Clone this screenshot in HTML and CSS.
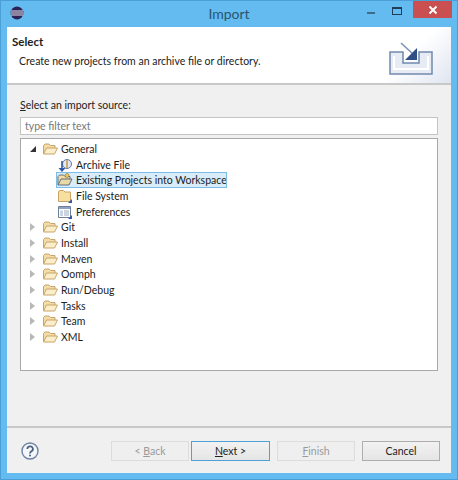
FILE: index.html
```html
<!DOCTYPE html>
<html lang="en">
<head>
    <meta charset="UTF-8">
    <title>Import</title>
    <link rel="stylesheet" href="styles.css">
</head>
<body>
    <div class="window">
        <div class="titlebar">
            <svg class="app-icon" width="16" height="16" viewBox="0 0 16 16">
                <circle cx="8" cy="8" r="6.500" fill="#2c2255"/>
                <path d="M2 6h12M1.600 8h12.800M2 10h12" stroke="#e8e4ee" stroke-width="1"/>
            </svg>
            <div class="title">Import</div>
            <div class="win-buttons">
                <div class="win-min"></div>
                <div class="win-max"></div>
                <div class="win-close">
                    <svg width="10" height="10" viewBox="0 0 10 10"><path d="M1.500 1.500l7 7M8.500 1.500l-7 7" stroke="#fff" stroke-width="2"/></svg>
                </div>
            </div>
        </div>
        <div class="content">
            <div class="banner">
                <div class="banner-text">
                    <div class="banner-title">Select</div>
                    <div class="banner-desc">Create new projects from an archive file or directory.</div>
                </div>
                <svg class="banner-icon" width="44" height="33" viewBox="0 0 44 33">
                    <path d="M1 10h13v11h16V10h13v22H1z" fill="#e6ebf4" stroke="#7189b0" stroke-width="1.500"/>
                    <path d="M5 14v13h34V14" fill="none" stroke="#fff" stroke-width="2"/>
                    <path d="M12 1l12 11" stroke="#7d93b8" stroke-width="1.600"/>
                    <path d="M28 6v12H16z" fill="#2f4f86"/>
                </svg>
            </div>
            <div class="main">
                <div class="source-label"><u>S</u>elect an import source:</div>
                <input class="filter" type="text" placeholder="type filter text">
                <div class="tree">
                    <div class="row"><span class="arrow open"></span><svg class="icon"><use href="#folder"/></svg><span class="name">General</span></div>
                    <div class="row child"><svg class="icon"><use href="#archive"/></svg><span class="name">Archive File</span></div>
                    <div class="row child selected"><svg class="icon"><use href="#projects"/></svg><span class="name">Existing Projects into Workspace</span></div>
                    <div class="row child"><svg class="icon"><use href="#filesys"/></svg><span class="name">File System</span></div>
                    <div class="row child"><svg class="icon"><use href="#prefs"/></svg><span class="name">Preferences</span></div>
                    <div class="row"><span class="arrow"></span><svg class="icon"><use href="#folder"/></svg><span class="name">Git</span></div>
                    <div class="row"><span class="arrow"></span><svg class="icon"><use href="#folder"/></svg><span class="name">Install</span></div>
                    <div class="row"><span class="arrow"></span><svg class="icon"><use href="#folder"/></svg><span class="name">Maven</span></div>
                    <div class="row"><span class="arrow"></span><svg class="icon"><use href="#folder"/></svg><span class="name">Oomph</span></div>
                    <div class="row"><span class="arrow"></span><svg class="icon"><use href="#folder"/></svg><span class="name">Run/Debug</span></div>
                    <div class="row"><span class="arrow"></span><svg class="icon"><use href="#folder"/></svg><span class="name">Tasks</span></div>
                    <div class="row"><span class="arrow"></span><svg class="icon"><use href="#folder"/></svg><span class="name">Team</span></div>
                    <div class="row"><span class="arrow"></span><svg class="icon"><use href="#folder"/></svg><span class="name">XML</span></div>
                </div>
            </div>
            <div class="footer">
                <svg class="help" width="18" height="18" viewBox="0 0 18 18">
                    <circle cx="9" cy="9" r="8" fill="#f4f6f9" stroke="#6d84a5" stroke-width="1.400"/>
                    <path d="M6.300 7a2.800 2.600 0 1 1 4.200 2.200c-1 .6-1.500 1-1.500 2.200" fill="none" stroke="#4a5f80" stroke-width="1.700"/>
                    <circle cx="9" cy="13.600" r="1" fill="#4a5f80"/>
                </svg>
                <div class="buttons">
                    <button class="btn" disabled>&lt; <u>B</u>ack</button>
                    <button class="btn default"><u>N</u>ext &gt;</button>
                    <button class="btn" disabled><u>F</u>inish</button>
                    <button class="btn cancel">Cancel</button>
                </div>
            </div>
        </div>
    </div>

    <svg class="defs" width="0" height="0">
        <defs>
            <g id="folder">
                <path d="M1.500 13V4.500L3 3h4l1.500 1.500H13V7" fill="#f3dca8" stroke="#c9a468"/>
                <path d="M1.500 13l3-6h11l-3 6z" fill="#fbeecb" stroke="#c9a468"/>
            </g>
            <g id="archive">
                <circle cx="10" cy="7" r="4.500" fill="#e3e8f2" stroke="#5f78a3"/>
                <path d="M10 3v8" stroke="#c09a4e" stroke-width="1.500"/>
                <path d="M5 4v8" stroke="#33589a" stroke-width="1.600"/>
                <path d="M1.500 11L5 15l3.500-4z" fill="#2f5aa8"/>
            </g>
            <g id="projects">
                <path d="M1 13V4.500L2.500 3h4L8 4.500h5V7" fill="#f3dca8" stroke="#5f6f80"/>
                <path d="M1 13l3-6h11l-3 6z" fill="#e9d9a6" stroke="#5f6f80"/>
                <circle cx="10" cy="3.500" r="2" fill="#f0c75a" stroke="#7a6a3a" stroke-width=".6"/>
            </g>
            <g id="filesys">
                <path d="M1.500 13.500V3.500L3 2.500h3.500L8 4h5.500v9.500z" fill="#f7dfa0" stroke="#c9a468"/>
                <path d="M11 15l4-4v4z" fill="#2f5aa8"/>
            </g>
            <g id="prefs">
                <path d="M1.500 2.500h12v11h-12z" fill="#fff" stroke="#6f7f99"/>
                <path d="M2 3h11v2H2z" fill="#8fa3c4"/>
                <path d="M3 6.500h3v5.500H3z" fill="#c8d3e5"/>
                <path d="M7 7h5M7 9h5M7 11h5" stroke="#9aa8bf"/>
                <path d="M11 15l4-4v4z" fill="#2f5aa8"/>
            </g>
        </defs>
    </svg>
</body>
</html>
```

FILE: styles.css
```css
* {
    box-sizing: border-box;
}
body {
    margin: 0;
    width: 458px;
    height: 480px;
    overflow: hidden;
    font-family: Lato, sans-serif;
    font-size: 10.500px;
    color: #222;
}
.window {
    display: flex;
    flex-direction: column;
    width: 458px;
    height: 480px;
    background-color: #63bbef;
    border: 1px solid #4a9fd6;
    padding: 0 6px 6px 6px;
}
.titlebar {
    position: relative;
    display: flex;
    align-items: center;
    height: 26px;
    padding-bottom: 2px;
    flex-shrink: 0;
}
.app-icon {
    margin-left: 2px;
}
.title {
    flex: 1;
    text-align: center;
    font-size: 14px;
    color: #2a5570;
    margin-right: 18px;
}
.win-buttons {
    position: absolute;
    top: 0;
    right: -1px;
    display: flex;
    align-items: flex-start;
}
.win-min {
    width: 8px;
    height: 2px;
    margin: 11px 17px 0 0;
    background-color: #3d6b8c;
}
.win-max {
    width: 10px;
    height: 8px;
    margin: 6px 11px 0 0;
    border: 1px solid #1f3c58;
    border-top-width: 2px;
    background-color: #63bbef;
}
.win-close {
    display: flex;
    align-items: center;
    justify-content: center;
    width: 39px;
    height: 17px;
    background-color: #c94f50;
}
.content {
    display: flex;
    flex-direction: column;
    flex: 1;
    background-color: #f0f0f0;
}
.banner {
    display: flex;
    justify-content: space-between;
    height: 58px;
    flex-shrink: 0;
    padding: 8px 18px 0 5px;
    background: linear-gradient(135deg, #fff 86%, #dfe5f1);
    border-bottom: 2px solid #c8c8c8;
}
.banner-title {
    font-size: 11.500px;
    font-weight: bold;
    color: #1e1e1e;
}
.banner-desc {
    margin: 7px 0 0 7px;
}
.banner-icon {
    margin-top: 7px;
}
.main {
    display: flex;
    flex-direction: column;
    flex: 1;
    padding: 12px 13px 0 13px;
}
.source-label {
    height: 16px;
    line-height: 16px;
}
.filter {
    display: block;
    width: 100%;
    height: 18px;
    margin: 4px 0 3px 0;
    padding: 0 4px;
    border: 1px solid #c4c4c4;
    background-color: #fff;
    font-family: Lato, sans-serif;
    font-size: 10.500px;
    outline: none;
}
.filter::placeholder {
    color: #777;
    opacity: 1;
}
.tree {
    height: 233px;
    padding-top: 2px;
    border: 1px solid #a8a8a8;
    background-color: #fff;
}
.row {
    display: flex;
    align-items: center;
    height: 15.700px;
    padding-left: 7px;
}
.row.child {
    padding-left: 36px;
}
.arrow {
    width: 0;
    height: 0;
    margin: 0 7px 0 2px;
    border-style: solid;
    border-width: 4px 0 4px 5px;
    border-color: transparent transparent transparent #b8b8b8;
}
.arrow.open {
    margin: 0 6px 0 2px;
    border-width: 0 0 6px 6px;
    border-color: transparent transparent #333 transparent;
}
.icon {
    flex-shrink: 0;
    width: 16px;
    height: 16px;
    margin-right: 3px;
}
.name {
    white-space: nowrap;
}
.row.selected {
    margin-left: 35px;
    width: 171px;
    padding-left: 1px;
    background-color: #d9ecf9;
    outline: 1px solid #7cbde8;
    outline-offset: -1px;
}
.footer {
    display: flex;
    align-items: center;
    justify-content: space-between;
    height: 47px;
    flex-shrink: 0;
    padding: 0 11px 0 14px;
    border-top: 2px solid #c8c8c8;
}
.buttons {
    display: flex;
}
.btn {
    width: 78px;
    height: 20px;
    margin-left: 2px;
    padding: 0;
    border: 1px solid #adadad;
    background: linear-gradient(#f2f2f2, #e5e5e5);
    font-family: Lato, sans-serif;
    font-size: 10.500px;
    color: #222;
}
.btn:disabled {
    border-color: #dcdcdc;
    background: #efefef;
    color: #9a9a9a;
}
.btn.default {
    width: 79px;
    border-color: #4f9fd8;
    margin-right: 5px;
}
.btn.cancel {
    margin-left: 7px;
}
.defs {
    position: absolute;
}
```
